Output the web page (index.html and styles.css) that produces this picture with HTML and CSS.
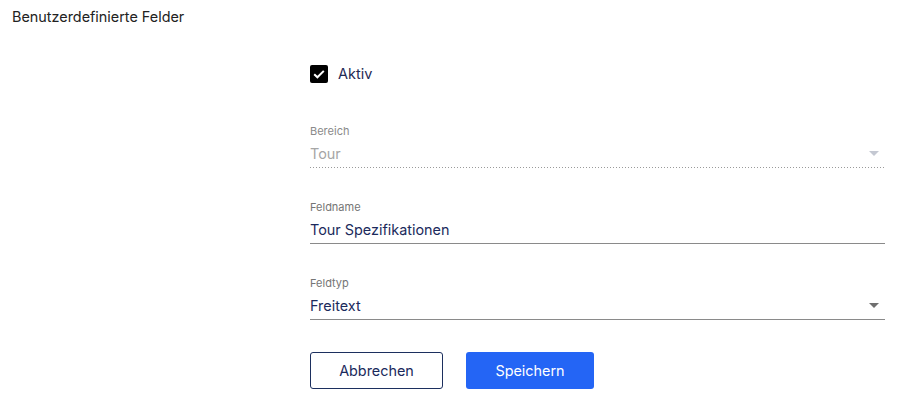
FILE: index.html
```html
<!DOCTYPE html>
<html lang="de">
<head>
<meta charset="utf-8">
<link rel="stylesheet" href="styles.css">
</head>
<body>
<div class="page">
  <h1 class="title">Benutzerdefinierte Felder</h1>
  <form class="form">
    <label class="check-row">
      <span class="checkbox">
        <svg viewBox="0 0 18 18" width="18" height="18"><rect x="0" y="0" width="18" height="18" rx="2" fill="#000"/><path d="M4.2 9.2 L7.4 12.3 L13.8 5.9" fill="none" stroke="#fff" stroke-width="2"/></svg>
      </span>
      <span class="check-label">Aktiv</span>
    </label>

    <div class="field disabled">
      <div class="field-label">Bereich</div>
      <div class="field-control">
        <span class="field-value">Tour</span>
        <span class="arrow"></span>
      </div>
    </div>

    <div class="field">
      <div class="field-label">Feldname</div>
      <div class="field-control">
        <span class="field-value">Tour Spezifikationen</span>
      </div>
    </div>

    <div class="field">
      <div class="field-label">Feldtyp</div>
      <div class="field-control">
        <span class="field-value">Freitext</span>
        <span class="arrow"></span>
      </div>
    </div>

    <div class="actions">
      <button type="button" class="btn btn-outline">Abbrechen</button>
      <button type="button" class="btn btn-primary">Speichern</button>
    </div>
  </form>
</div>
</body>
</html>
```

FILE: styles.css
```css
* { box-sizing: border-box; }
html, body { margin: 0; padding: 0; background: #fff; }
body {
  font-family: Inter, "Noto Sans", sans-serif;
  color: #222;
}
.page { padding: 7px 12px 0 12px; }
.title {
  margin: 0;
  font-size: 14.4px;
  line-height: 20px;
  font-weight: 400;
  color: #222;
}
.form {
  margin-left: 298px;
  width: 575px;
  padding-top: 38px;
  display: flex;
  flex-direction: column;
}
.check-row {
  display: flex;
  align-items: center;
  height: 18px;
  gap: 10px;
}
.checkbox { display: block; width: 18px; height: 18px; }
.checkbox svg { display: block; }
.check-label {
  font-size: 14.5px;
  line-height: 20px;
  color: #1f2a55;
}
.field { margin-top: 31px; }
.check-row + .field { margin-top: 40px; }
.field-label {
  font-size: 11px;
  line-height: 16px;
  color: #757575;
}
.field-control {
  margin-top: 5px;
  display: flex;
  align-items: center;
  justify-content: space-between;
  height: 24px;
  padding-bottom: 3px;
  border-bottom: 1px solid #8a8a8a;
}
.field-value {
  font-size: 14.4px;
  line-height: 20px;
  color: #1b2a5c;
}
.arrow {
  width: 0; height: 0;
  margin-right: 6px;
  margin-top: -2px;
  border-left: 5px solid transparent;
  border-right: 5px solid transparent;
  border-top: 5px solid #6f6f6f;
}
.disabled .field-label { color: #8a8a8a; }
.disabled .field-value { color: #a6a6a6; }
.disabled .arrow { border-top-color: #c4c8d2; }
.disabled .field-control {
  border-bottom: none;
  padding-bottom: 4px;
  background-image: linear-gradient(to right, #9a9a9a 0%, #9a9a9a 34%, transparent 34%);
  background-size: 3px 1px;
  background-repeat: repeat-x;
  background-position: 0 bottom;
}
.actions {
  display: flex;
  gap: 23px;
  margin-top: 32px;
}
.btn {
  font-family: Inter, "Noto Sans", sans-serif;
  font-size: 14.4px;
  height: 37px;
  border-radius: 3px;
  cursor: pointer;
  padding: 0;
}
.btn-outline {
  width: 133px;
  background: #fff;
  color: #1b2a5c;
  border: 1.5px solid #1c2f5e;
}
.btn-primary {
  width: 128px;
  background: #2465f5;
  color: #fff;
  border: none;
}
```
